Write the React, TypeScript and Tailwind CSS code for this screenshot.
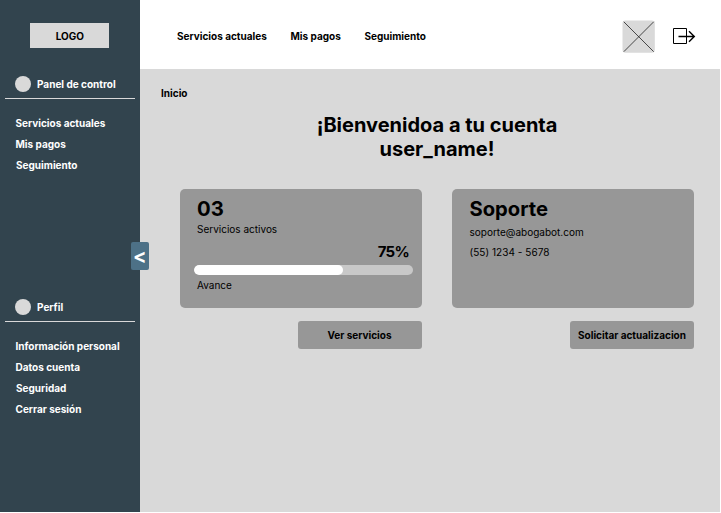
import React from "react";

function NavItem({ label, className = "" }: { label: string; className?: string }) {
  return <a className={`block h-[21px] whitespace-nowrap leading-[21px] ${className}`}>{label}</a>;
}

function SectionTitle({ label }: { label: string }) {
  return (
    <div className="mx-[5px] flex h-[23px] items-start border-b border-[#d9d9d9] pl-[10px]">
      <span className="h-4 w-4 rounded-full bg-[#d9d9d9]" />
      <span className="ml-[6px] whitespace-nowrap leading-4">{label}</span>
    </div>
  );
}

function Sidebar() {
  return (
    <aside className="relative flex w-[140px] shrink-0 flex-col bg-[#32444e] text-white">
      <div className="ml-[30.4px] mt-[23px] flex h-[25px] w-[79px] items-center justify-center bg-[#d9d9d9] pt-px text-black">LOGO</div>
      <div className="mt-[28px]">
        <SectionTitle label="Panel de control" />
      </div>
      <nav className="mt-[14px] pl-[15.5px]">
        <NavItem label="Servicios actuales" />
        <NavItem label="Mis pagos" />
        <NavItem label="Seguimiento" className="pl-[0.5px]" />
      </nav>
      <div className="mt-[123px]">
        <SectionTitle label="Perfil" />
      </div>
      <nav className="mt-[14px] pl-[15.5px]">
        <NavItem label="Información personal" />
        <NavItem label="Datos cuenta" />
        <NavItem label="Seguridad" className="pl-[0.5px]" />
        <NavItem label="Cerrar sesión" />
      </nav>
      <button className="absolute left-[131px] top-[242px] flex h-7 w-[17.5px] items-center justify-center rounded-[2px] bg-[#4d7187] text-[20px] leading-7 text-white">
        &lt;
      </button>
    </aside>
  );
}

function Header() {
  return (
    <header className="flex h-[68.5px] items-center bg-white pl-[37px] pt-1">
      <nav className="flex items-center gap-[23.7px] whitespace-nowrap">
        <a>Servicios actuales</a>
        <a>Mis pagos</a>
        <a>Seguimiento</a>
      </nav>
      <svg className="ml-auto h-[33px] w-[33px]" viewBox="0 0 33 33" fill="none">
        <rect x="0.5" y="0.5" width="32.3" height="32.3" rx="3" fill="#d9d9d9" />
        <path d="M1.8 1.8 31.7 31.7M31.7 1.8 1.8 31.7" stroke="#222" strokeWidth="0.8" />
      </svg>
      <svg className="ml-[18px] mr-[24px] h-[18px] w-[23px]" viewBox="0 0 23 18" fill="none" stroke="#000">
        <path d="M.5 1.5h13v15H.5z" strokeWidth="1" />
        <path d="M5.5 9.5H21M16 4.2 21.3 9.5 16 14.8" strokeWidth="1.4" />
      </svg>
    </header>
  );
}

function Card({ children }: { children: React.ReactNode }) {
  return <section className="h-[119.5px] w-[242px] rounded-[5px] bg-[#979797] pt-[8px]">{children}</section>;
}

function Action({ label }: { label: string }) {
  return (
    <button className="mt-[13px] flex h-[27.5px] w-[124px] items-center justify-center whitespace-nowrap rounded-[3px] bg-[#979797]">
      {label}
    </button>
  );
}

export default function App() {
  return (
    <div className="h-[513px] w-[721px] overflow-hidden bg-white">
      <div className="flex h-[512px] w-[720px] overflow-hidden bg-[#d9d9d9] font-['Inter',sans-serif] text-[10px] font-bold leading-4 text-black">
        <Sidebar />
        <main className="flex min-w-0 flex-1 flex-col">
          <Header />
          <div className="pl-[21px] pt-[16.5px]">Inicio</div>
          <h1 className="mt-[12px] pl-[14px] text-center text-[20px] leading-6">
            ¡Bienvenidoa a tu cuenta
            <br />
            user_name!
          </h1>
          <div className="mt-[27.5px] flex gap-[30.5px] pl-[39.5px]">
            <div className="flex flex-col items-end">
              <Card>
                <h2 className="pl-[17.5px] text-[20.3px] leading-6">03</h2>
                <p className="pl-[17.5px] font-normal leading-4">Servicios activos</p>
                <p className="pr-[12.5px] pt-[2.5px] text-right text-[15px] leading-[25px] tracking-[-0.7px]">75%</p>
                <div className="ml-[14px] mt-[0.5px] h-[10.5px] w-[219.5px] overflow-hidden rounded-full bg-[#c8c8c8]">
                  <div className="h-full w-[149.5px] rounded-full bg-white" />
                </div>
                <p className="mt-[2px] pl-[17.5px] font-normal">Avance</p>
              </Card>
              <Action label="Ver servicios" />
            </div>
            <div className="flex flex-col items-end">
              <Card>
                <h2 className="pl-[17.5px] text-[20.2px] leading-6">Soporte</h2>
                <p className="mt-px pl-[17.5px] font-normal leading-5">soporte@abogabot.com</p>
                <p className="pl-[17.5px] font-normal leading-5 tracking-[0.04px]">(55) 1234 - 5678</p>
              </Card>
              <Action label="Solicitar actualizacion" />
            </div>
          </div>
        </main>
      </div>
    </div>
  );
}
